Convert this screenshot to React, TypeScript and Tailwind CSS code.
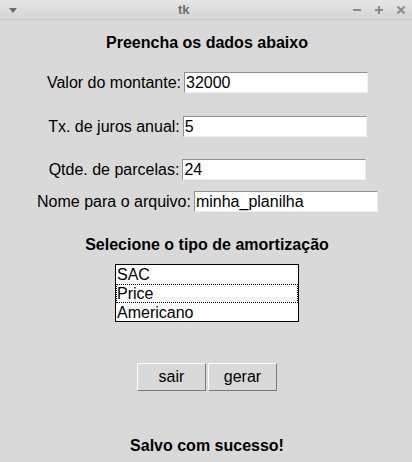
import React from 'react'

const fields = [
  { label: 'Valor do montante:', value: '32000', mt: 'mt-[20px]' },
  { label: 'Tx. de juros anual:', value: '5', mt: 'mt-[23px]' },
  { label: 'Qtde. de parcelas:', value: '24', mt: 'mt-[22px]' },
  { label: 'Nome para o arquivo:', value: 'minha_planilha', mt: 'mt-[11px]' },
]

function TitleBar() {
  return (
    <div className="h-[20px] flex items-center px-[6px] bg-gradient-to-b from-[#e6e6e6] to-[#d4d4d4] border-b border-[#c8c8c8]">
      <svg width="10" height="8" viewBox="0 0 10 8" className="ml-[2px]">
        <path d="M1 2h8L5 7z" fill="#6b6b6b" />
      </svg>
      <span className="text-[13px] font-bold text-[#6e6e6e] ml-[160px]">tk</span>
      <div className="ml-auto flex items-center gap-[12px]">
        <svg width="10" height="10" viewBox="0 0 10 10">
          <path d="M1 5h8" stroke="#8a8a8a" strokeWidth="2" />
        </svg>
        <svg width="10" height="10" viewBox="0 0 10 10">
          <path d="M1 5h8M5 1v8" stroke="#8a8a8a" strokeWidth="2" />
        </svg>
        <svg width="10" height="10" viewBox="0 0 10 10">
          <path d="M1.5 1.5l7 7M8.5 1.5l-7 7" stroke="#8a8a8a" strokeWidth="2" />
        </svg>
      </div>
    </div>
  )
}

export default function App() {
  return (
    <div
      className="w-[412px] h-[462px] bg-[#d9d9d9] text-black overflow-hidden"
      style={{ fontFamily: '"Liberation Sans", Arial, sans-serif' }}
    >
      <TitleBar />
      <div className="flex flex-col items-center pl-[2px]">
        <div className="mt-[13px] text-[16px] leading-[19px] font-bold">Preencha os dados abaixo</div>

        {fields.map((f) => (
          <div key={f.label} className={`flex items-center ml-[1px] ${f.mt}`}>
            <span className="text-[16px] leading-[19px] mr-[3px]">{f.label}</span>
            <div className="w-[184px] h-[21px] bg-white border border-t-[#8f8f8f] border-l-[#8f8f8f] border-b-[#efefef] border-r-[#efefef] text-[16px] leading-[19px] pl-[1px]">
              {f.value}
            </div>
          </div>
        ))}

        <div className="mt-[23px] text-[16px] leading-[19px] font-bold">Selecione o tipo de amortização</div>

        <div className="mt-[10px] w-[184px] h-[58px] bg-white border border-black flex flex-col text-[16px] leading-[19px]">
          <div className="pl-[1px]">SAC</div>
          <div className="pl-[1px] outline outline-1 outline-dotted outline-black -outline-offset-1">Price</div>
          <div className="pl-[1px]">Americano</div>
        </div>

        <div className="mt-[41px] flex gap-[2px]">
          <button className="w-[69px] h-[28px] bg-[#d9d9d9] border border-t-white border-l-white border-b-[#7a7a7a] border-r-[#7a7a7a] text-[16px]">
            sair
          </button>
          <button className="w-[69px] h-[28px] bg-[#d9d9d9] border border-t-white border-l-white border-b-[#7a7a7a] border-r-[#7a7a7a] text-[16px]">
            gerar
          </button>
        </div>

        <div className="mt-[45px] text-[16px] leading-[19px] font-bold">Salvo com sucesso!</div>
      </div>
    </div>
  )
}
